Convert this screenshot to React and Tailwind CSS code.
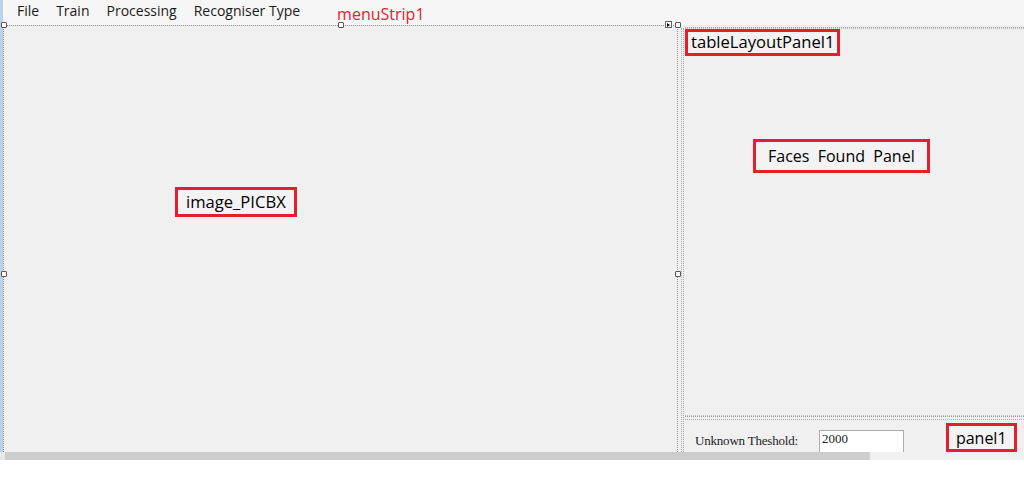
import React from 'react';

const font = { fontFamily: '"Open Sans", "Noto Sans", Arial, sans-serif' };

function Handle({ className }) {
  return (
    <div className={`absolute w-[6px] h-[6px] bg-white border border-[#555] rounded-[1px] ${className}`}></div>
  );
}

function Tag({ children, className = '' }) {
  return (
    <div className={`inline-flex items-center border-[3px] border-[#e61e2b] bg-[#f3f3f3] text-black leading-none ${className}`}>
      {children}
    </div>
  );
}

export default function App() {
  return (
    <div className="w-[1024px] h-[490px] bg-white relative overflow-hidden" style={font}>
      {/* menu strip */}
      <div className="h-[25px] bg-[#f6f6f6] flex items-center text-[14px] text-[#1a1a1a]">
        <div className="w-[3px] h-full bg-[#bcd2ea]"></div>
        <div className="flex items-center gap-[17px] pl-[14px] -mt-[4px]">
          <span>File</span>
          <span>Train</span>
          <span>Processing</span>
          <span>Recogniser Type</span>
        </div>
        <span className="ml-[37px] text-[16px] text-[#e8202a] mt-[3px]">menuStrip1</span>
      </div>

      {/* main area */}
      <div className="h-[427px] flex">
        <div className="w-[3px] bg-[#bcd2ea]"></div>
        <div className="w-[673px] bg-[#f0f0f0] border-t border-l border-dotted border-[#8d8d8d] relative">
          <div className="pt-[161px] pl-[171px]">
            <Tag className="h-[30px] px-[8px] text-[16.6px]">image_PICBX</Tag>
          </div>
        </div>
        {/* splitter */}
        <div className="w-[9px] bg-[#f0f0f0] flex pt-[1px]">
          <div className="w-[1px] h-full border-l border-dotted border-[#999] ml-[1px]"></div>
          <div className="w-[3px] h-full border-x border-dotted border-[#aaa] ml-[3px] mt-[2px]"></div>
        </div>
        {/* right column */}
        <div className="flex-1 flex flex-col bg-[#f0f0f0] pt-[2px]">
          <div className="h-[390px] border-t border-b border-dotted border-[#999] relative">
            <div className="h-full border-t border-b border-dotted border-[#bbb]">
              <Tag className="h-[27px] px-[3px] text-[16.6px]">tableLayoutPanel1</Tag>
              <div className="pt-[83px] pl-[68px]">
                <Tag className="h-[34px] px-[12px] text-[16px]">Faces&nbsp; Found&nbsp; Panel</Tag>
              </div>
            </div>
          </div>
          <div className="flex-1 mt-[2px] border-t border-dotted border-[#aaa] flex items-end">
            <span
              className="ml-[10px] mb-[2px] text-[13px] text-[#222] tracking-[-0.2px]"
              style={{ fontFamily: '"Liberation Serif", "Times New Roman", serif' }}
            >
              Unknown Theshold:
            </span>
            <div
              className="ml-[21px] w-[85px] h-[22px] bg-white border border-[#adadad] border-b-0 px-[2px] pt-[1px] text-[13px] text-[#222] leading-none"
              style={{ fontFamily: '"Liberation Serif", "Times New Roman", serif' }}
            >
              2000
            </div>
            <Tag className="ml-[42px] h-[29px] px-[7px] text-[16px]">panel1</Tag>
          </div>
        </div>
      </div>

      {/* horizontal scrollbar */}
      <div className="h-[8px] flex bg-[#ececec]">
        <div className="w-[5px] bg-[#e8e8e8]"></div>
        <div className="w-[865px] bg-[#cdcdcd]"></div>
        <div className="flex-1 bg-[#f0f0f0]"></div>
      </div>

      {/* design-time handles */}
      <Handle className="left-[1px] top-[22px]" />
      <Handle className="left-[338px] top-[22px]" />
      <Handle className="left-[675px] top-[22px]" />
      <Handle className="left-[1px] top-[271px]" />
      <Handle className="left-[675px] top-[271px]" />
      <div className="absolute left-[665px] top-[21px] w-[7px] h-[7px] bg-white border border-[#666] flex items-center justify-center">
        <div className="w-0 h-0 border-y-[2px] border-y-transparent border-l-[3px] border-l-black"></div>
      </div>
    </div>
  );
}
